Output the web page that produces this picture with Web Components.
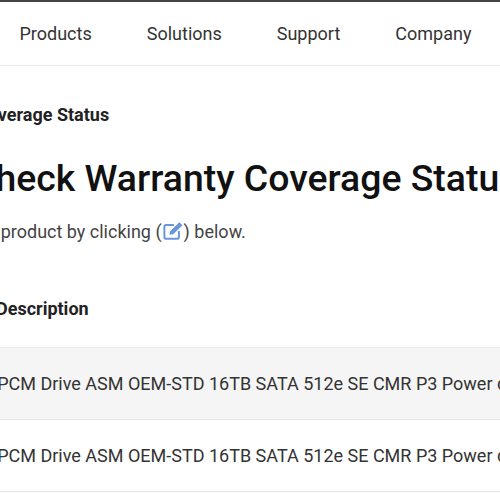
<!DOCTYPE html>
<html lang="en">
<head>
<meta charset="utf-8">
<title>Check Warranty Coverage Status</title>
<style>
  html, body { margin: 0; padding: 0; background: #fff; overflow: hidden; width: 500px; height: 500px; }
  body { font-family: Roboto, "Liberation Sans", sans-serif; color: #222; }
</style>
</head>
<body>
<site-nav>
  <a href="#">Products</a>
  <a href="#">Solutions</a>
  <a href="#">Support</a>
  <a href="#">Company</a>
</site-nav>
<warranty-page>
  <span slot="crumb">Coverage Status</span>
  <span slot="title">Check Warranty Coverage Status</span>
  <warranty-table>
    <warranty-row shaded>SPCM Drive ASM OEM-STD 16TB SATA 512e SE CMR P3 Power disable</warranty-row>
    <warranty-row>SPCM Drive ASM OEM-STD 16TB SATA 512e SE CMR P3 Power disable</warranty-row>
  </warranty-table>
</warranty-page>

<script>
class SiteNav extends HTMLElement {
  connectedCallback() {
    this.attachShadow({ mode: 'open' });
    this.shadowRoot.innerHTML = `
      <style>
        :host {
          display: flex;
          box-sizing: border-box;
          height: 66px;
          gap: 55px;
          align-items: center;
          padding: 0 0 0 19.5px;
          border-top: 2px solid #444;
          border-bottom: 1px solid #ececec;
          font-size: 18px;
          color: #333;
        }
        ::slotted(a) { color: #333; text-decoration: none; white-space: nowrap; }
      </style>
      <slot></slot>
    `;
  }
}

class WarrantyPage extends HTMLElement {
  connectedCallback() {
    this.attachShadow({ mode: 'open' });
    this.shadowRoot.innerHTML = `
      <style>
        :host { display: block; }
        .inner { padding-top: 38px; }
        .crumb { margin-left: -24px; font-size: 18px; font-weight: 700; color: #222; line-height: 22px; }
        h1 { margin: 30px 0 0 -29px; font-size: 37.4px; font-weight: 500; line-height: 44px; color: #111; white-space: nowrap; }
        p { margin: 21px 0 0 -67.5px; font-size: 18px; line-height: 22px; color: #444; white-space: nowrap; }
        svg { width: 22px; height: 20px; vertical-align: -3px; }
      </style>
      <div class="inner">
        <div class="crumb"><slot name="crumb"></slot></div>
        <h1><slot name="title"></slot></h1>
        <p>Select a product by clicking (<svg viewBox="0 0 24 22" fill="none"><path d="M13 4.500H4.500A2 2 0 0 0 2.500 6.500v11a2 2 0 0 0 2 2h12a2 2 0 0 0 2-2V11" stroke="#6b97da" stroke-width="2.200"/><path d="M8 15l1-4L19 1.500l3.500 3.300L12.300 14.500z" fill="#6b97da"/></svg>) below.</p>
      </div>
      <slot></slot>
    `;
  }
}

class WarrantyTable extends HTMLElement {
  connectedCallback() {
    this.attachShadow({ mode: 'open' });
    this.shadowRoot.innerHTML = `
      <style>
        :host { display: block; margin-top: 55px; }
        .head { margin-left: -4px; font-size: 18px; font-weight: 700; line-height: 22px; height: 49px; color: #222; }
        .rows { border-top: 1px solid #ececec; }
      </style>
      <div class="head">Description</div>
      <div class="rows"><slot></slot></div>
    `;
  }
}

class WarrantyRow extends HTMLElement {
  connectedCallback() {
    this.attachShadow({ mode: 'open' });
    this.shadowRoot.innerHTML = `
      <style>
        :host {
          display: block;
          box-sizing: border-box;
          height: 72px;
          padding-top: 25px;
          border-bottom: 1px solid #e6e6e6;
          font-size: 18px;
          line-height: 22px;
          color: #333;
          white-space: nowrap;
        }
        :host([shaded]) { background: #f5f5f5; }
        .t { display: block; margin-left: -13.5px; }
      </style>
      <span class="t"><slot></slot></span>
    `;
  }
}

customElements.define('site-nav', SiteNav);
customElements.define('warranty-page', WarrantyPage);
customElements.define('warranty-table', WarrantyTable);
customElements.define('warranty-row', WarrantyRow);
</script>
</body>
</html>
